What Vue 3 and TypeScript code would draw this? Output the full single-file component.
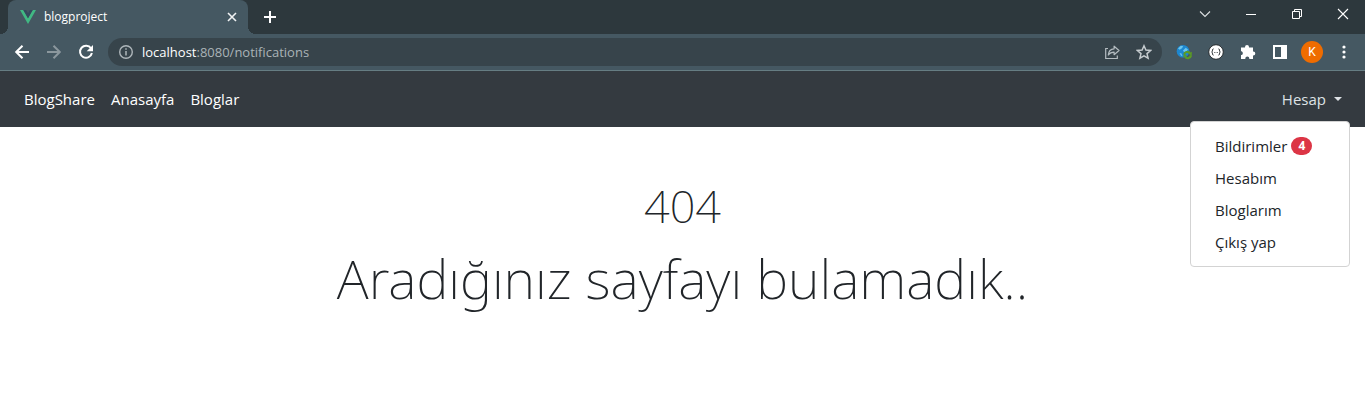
<script setup lang="ts">
import { ref } from 'vue'

interface NavLink { label: string; href: string }
interface MenuLink extends NavLink { count?: number }

const address = ref('localhost:8080/notifications')
const open = ref(true)
const links: NavLink[] = [
  { label: 'BlogShare', href: '#home' },
  { label: 'Anasayfa', href: '#anasayfa' },
  { label: 'Bloglar', href: '#bloglar' },
]
const menu: MenuLink[] = [
  { label: 'Bildirimler', href: '#bildirimler', count: 4 },
  { label: 'Hesabım', href: '#hesabim' },
  { label: 'Bloglarım', href: '#bloglarim' },
  { label: 'Çıkış yap', href: '#cikis' },
]
</script>

<template>
  <div class="window">
    <header class="browser">
      <div class="strip">
        <div class="tab">
          <svg class="icon16" viewBox="0 0 16 16" aria-hidden="true">
            <path fill="#41b883" d="M0 1h3.3L8 9.2 12.7 1H16L8 15z" />
            <path fill="#35495e" d="M3.3 1h2.8L8 4.3 9.9 1h2.8L8 9.2z" />
          </svg>
          <span class="tab-title">blogproject</span>
          <button class="bare" aria-label="Close tab">
            <svg class="icon16" viewBox="0 0 16 16"><path d="M4 4l8 8M12 4l-8 8" stroke="#f1f3f4" stroke-width="1.6" /></svg>
          </button>
        </div>
        <button class="bare add" aria-label="New tab">
          <svg class="icon16" viewBox="0 0 16 16"><path d="M8 2v12M2 8h12" stroke="#fff" stroke-width="2" /></svg>
        </button>
        <div class="controls">
          <button class="bare" aria-label="Search tabs">
            <svg class="icon16" viewBox="0 0 16 16"><path d="M3 5.500l5 5 5-5" fill="none" stroke="#dde1e3" stroke-width="1.100" /></svg>
          </button>
          <button class="bare" aria-label="Minimize">
            <svg class="icon16" viewBox="0 0 16 16"><path d="M3 8.500h10" stroke="#fff" /></svg>
          </button>
          <button class="bare" aria-label="Restore">
            <svg class="icon16" viewBox="0 0 16 16"><path d="M3.500 5.500h7v7h-7zM5.500 5.500v-2h7v7h-2" fill="none" stroke="#fff" /></svg>
          </button>
          <button class="bare" aria-label="Close window">
            <svg class="icon16" viewBox="0 0 16 16"><path d="M3 3l10 10M13 3L3 13" stroke="#fff" stroke-width="1.100" /></svg>
          </button>
        </div>
      </div>

      <div class="toolbar">
        <div class="history">
          <button class="bare" aria-label="Back">
            <svg class="icon16" viewBox="0 0 16 16"><path d="M15 8H2.500M8.500 1.700L2.200 8l6.300 6.300" fill="none" stroke="#fff" stroke-width="2" /></svg>
          </button>
          <button class="bare" aria-label="Forward">
            <svg class="icon16" viewBox="0 0 16 16"><path d="M1 8h12.500M7.500 1.700L13.800 8l-6.300 6.300" fill="none" stroke="#8b979d" stroke-width="2" /></svg>
          </button>
          <button class="bare" aria-label="Reload">
            <svg class="icon16" viewBox="0 0 16 16">
              <path d="M13 4.300A6 6 0 1 0 13.900 9" fill="none" stroke="#fff" stroke-width="2" />
              <path d="M15 1v6.300H8.700z" fill="#fff" />
            </svg>
          </button>
        </div>
        <div class="omnibox">
          <svg class="icon16" viewBox="0 0 16 16" aria-hidden="true">
            <circle cx="8" cy="8" r="6.300" fill="none" stroke="#aeb6ba" stroke-width="1.400" />
            <path d="M8 7v4.500M8 4.300v1.500" stroke="#aeb6ba" stroke-width="1.500" />
          </svg>
          <label class="address">
            <span class="address-text" aria-hidden="true"><b>localhost</b>:8080/notifications</span>
            <input v-model="address" type="text" aria-label="Address" />
          </label>
          <button class="bare" aria-label="Share">
            <svg class="icon16" viewBox="0 0 16 16">
              <path d="M4 4.500H1.700v10h11.600v-3" fill="none" stroke="#b4bcc0" stroke-width="1.200" />
              <path d="M4.300 11c.3-3.800 2.400-6 5.800-6.200V2.200L15 6.500l-4.900 4.200V8.200C7.500 8.200 5.700 9 4.300 11z" fill="none" stroke="#b4bcc0" stroke-width="1.200" stroke-linejoin="round" />
            </svg>
          </button>
          <button class="bare" aria-label="Bookmark">
            <svg class="icon16" viewBox="0 0 16 16"><path d="M8 1.800l1.900 4.300 4.700.4L11 9.600l1.100 4.600L8 11.800l-4.100 2.400L5 9.600 1.400 6.500l4.700-.4z" fill="none" stroke="#c5cbce" stroke-width="1.500" /></svg>
          </button>
        </div>
        <div class="extensions">
          <button class="bare" aria-label="Translate extension">
            <svg class="icon16" viewBox="0 0 16 16">
              <circle cx="7" cy="7.300" r="6.300" fill="#1d87cf" />
              <path d="M2 4.500l2.800-2.800 2.400.6L6 4.300 3.800 5.800zM7 6.500l2.700-2.700 2.300 1.800-1.500 2-2.500.5zM3.500 9l2 .5 1 2.500-1.500-.3z" fill="#69c4ed" />
              <path d="M8.200 10.600c.4-3 4.300-3.600 5.700-1.100M15 11.300c-.6 3.300-4.600 3.900-5.800 1.300" fill="none" stroke="#5b9b24" stroke-width="2.200" />
              <path d="M7 13.200l1.300-3.500 2.800 2.400zM12.200 9.700l3.600-2-.1 3.900z" fill="#5b9b24" />
            </svg>
          </button>
          <button class="bare" aria-label="JSON extension">
            <svg class="icon16" viewBox="0 0 16 16">
              <circle cx="8" cy="8" r="7.300" fill="#fff" stroke="#252a2d" />
              <path d="M5.500 4.800C4 4.800 5 7.300 3.700 8c1.300.7.3 3.200 1.800 3.200M10.500 4.800c1.500 0 .5 2.500 1.800 3.200-1.300.7-.3 3.200-1.800 3.200" fill="none" stroke="#252a2d" />
              <path d="M6 8.500h.8M7.600 8.500h.8M9.200 8.500h.8" stroke="#54585a" />
            </svg>
          </button>
          <button class="bare" aria-label="Extensions">
            <svg class="icon16" viewBox="0 0 16 16"><path d="M1 3.500h4V3a2 2 0 0 1 4 0v.5h4v4h.3a2 2 0 0 1 0 4H13V15H9.300v-.5a2 2 0 0 0-4 0v.5H1v-4h.6a2 2 0 0 0 0-3.700H1z" fill="#fff" /></svg>
          </button>
          <button class="bare" aria-label="Side panel">
            <svg class="icon16" viewBox="0 0 16 16"><path fill="#fff" fill-rule="evenodd" d="M1 1h14v14H1zM3 3v10h6V3z" /></svg>
          </button>
          <button class="avatar" aria-label="Profile K">K</button>
          <button class="bare" aria-label="Menu">
            <svg class="icon16" viewBox="0 0 16 16"><g fill="#fff"><circle cx="8" cy="3" r="1.600" /><circle cx="8" cy="8" r="1.600" /><circle cx="8" cy="13" r="1.600" /></g></svg>
          </button>
        </div>
      </div>
    </header>

    <nav class="navbar">
      <a v-for="link in links" :key="link.label" :href="link.href">{{ link.label }}</a>
      <div class="account">
        <button class="toggle" :aria-expanded="open" @click="open = !open">Hesap<span class="caret"></span></button>
        <div v-if="open" class="menu">
          <a v-for="item in menu" :key="item.label" :href="item.href">
            {{ item.label }}<span v-if="item.count" class="badge">{{ item.count }}</span>
          </a>
        </div>
      </div>
    </nav>

    <main class="missing">
      <h1>404</h1>
      <p>Aradığınız sayfayı bulamadık..</p>
    </main>
  </div>
</template>

<style>
body { margin: 0; background: #fff; }
</style>

<style scoped>
* { box-sizing: border-box; }
.window { font-family: "Segoe UI", "Open Sans", "Noto Sans", sans-serif; color: #212529; }
.bare { display: flex; padding: 0; border: 0; background: none; }
.icon16 { display: block; flex: none; width: 16px; height: 16px; }
.strip { display: flex; align-items: center; height: 34px; padding: 0 14px 0 8px; background: #2d383d; }
.tab { position: relative; display: flex; align-items: center; width: 240px; height: 34px; padding: 0 8px 0 12px; border-radius: 8px 8px 0 0; background: #455862; }
.tab::before, .tab::after { content: ""; position: absolute; bottom: 0; width: 8px; height: 8px; }
.tab::before { left: -8px; background: radial-gradient(circle at 0 0, transparent 8px, #455862 8px); }
.tab::after { right: -8px; background: radial-gradient(circle at 100% 0, transparent 8px, #455862 8px); }
.tab-title { flex: 1; padding-left: 8px; color: #fff; font-size: 12px; line-height: 16px; }
.add { margin-left: 14px; }
.controls { display: flex; gap: 30px; margin: 0 0 6px auto; }
.toolbar { display: flex; align-items: center; height: 37px; padding: 0 13px 0 14px; background: #455862; border-bottom: 1px solid #667d83; }
.history { display: flex; gap: 16px; }
.omnibox { display: flex; flex: 1; align-items: center; gap: 16px; height: 28px; margin-left: 14px; padding: 0 10px; border-radius: 14px; background: #37444b; }
.address { position: relative; flex: 1; margin-left: -8px; font-size: 13px; line-height: 20px; color: #aab3b7; }
.address-text { display: block; }
.address b { font-weight: 400; color: #fff; }
.address input { position: absolute; inset: 0; width: 100%; padding: 0; border: 0; outline: 0; background: none; color: transparent; font: inherit; }
.extensions { display: flex; align-items: center; gap: 16px; margin-left: 14px; }
.extensions .avatar { margin: 0 -3px; }
.avatar { width: 22px; height: 22px; padding: 0; border: 0; border-radius: 50%; background: #ef6c00; color: #fff; font: 12px/22px "Roboto", sans-serif; }
.navbar { display: flex; align-items: center; gap: 16px; height: 56px; padding: 0 15px 0 24px; background: #343a40; font-size: 15px; line-height: 24px; }
.navbar > a { color: #fff; text-decoration: none; }
.account { position: relative; margin-left: auto; }
.toggle { display: flex; align-items: center; gap: 8px; padding: 8px; border: 0; background: none; color: #dee2e6; font: inherit; }
.caret { border: 4px solid transparent; border-top-color: #dee2e6; border-bottom: 0; }
.menu { position: absolute; top: 42px; right: 0; width: 160px; padding: 8px 0; border: 1px solid #d3d3d3; border-radius: 4px; background: #fff; }
.menu a { display: flex; align-items: center; gap: 4px; padding: 4px 24px; color: #212529; text-decoration: none; }
.badge { padding: 0 7px; border-radius: 10px; background: #dc3545; color: #fff; font-size: 12px; font-weight: 700; line-height: 18px; }
.missing { padding: 48px 16px; text-align: center; font-family: "Segoe UI", "Noto Sans", "Open Sans", sans-serif; font-weight: 200; }
.missing h1 { margin: 0 0 8px; font-size: 45px; font-weight: 200; line-height: 62px; }
.missing p { margin: 0; font-size: 54px; line-height: 66px; }
</style>
